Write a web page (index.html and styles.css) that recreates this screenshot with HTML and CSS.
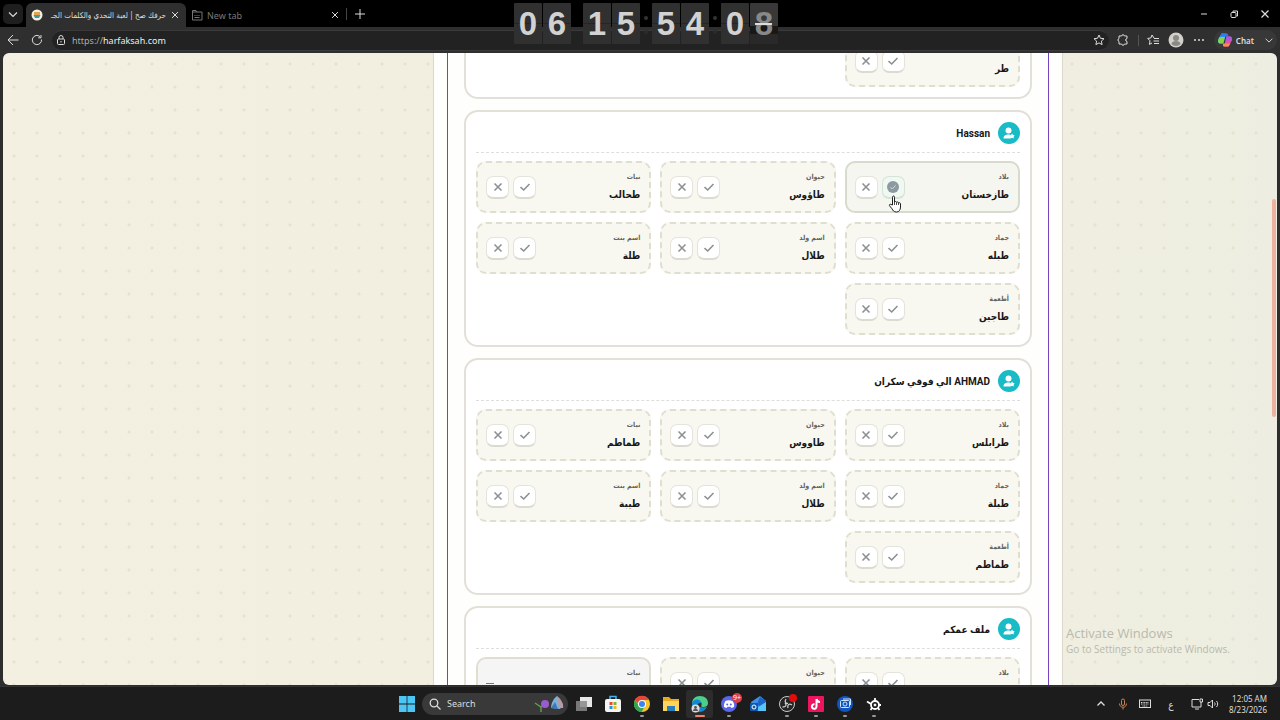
FILE: index.html
```
<!DOCTYPE html>
<html lang="ar">
<head>
<meta charset="utf-8">
<meta name="viewport" content="width=device-width, initial-scale=1">
<title>حرفك صح</title>
<link rel="stylesheet" href="styles.css">
</head>
<body>
<svg class="defs" aria-hidden="true">
  <symbol id="check" viewBox="0 0 12 12"><path d="M1.500 6.200 4.700 9 10.500 3" fill="none" stroke="currentColor" stroke-width="1.600"/></symbol>
  <symbol id="cross" viewBox="0 0 12 12"><path d="M2.500 2.500l7 7M9.500 2.500l-7 7" fill="none" stroke="currentColor" stroke-width="1.600"/></symbol>
  <symbol id="close" viewBox="0 0 12 12"><path d="M2.500 2.500l7 7M9.500 2.500l-7 7" fill="none" stroke="currentColor" stroke-width="1.200"/></symbol>
  <symbol id="chevron" viewBox="0 0 12 12"><path d="M2 4.500l4 4 4-4" fill="none" stroke="currentColor" stroke-width="1.100"/></symbol>
  <symbol id="person" viewBox="0 0 22 22"><circle cx="10.500" cy="8.500" r="3" fill="#fff"/><path d="M5.500 16.500c0-3 2-4 5-4 1.500 0 2 .3 2.500.8l-.5 3.200z" fill="#fff"/><path d="M14 11.500l1 1.600 1.700.3-1.100 1.300.2 1.700-1.800-.6-1.600.6.1-1.700-1.100-1.300 1.700-.3z" fill="#fff"/></symbol>
</svg>
<div class="desktop">
  <header class="tabs">
    <button class="tab-menu" aria-label="Tab actions"><svg class="i12"><use href="#chevron"/></svg></button>
    <div class="tab tab-active">
      <svg class="i12" viewBox="0 0 12 12"><circle cx="6" cy="6" r="5.500" fill="#f6f1df"/><path d="M3 3h6v3H3z" fill="#e5a34e"/><path d="M2.500 6h7L8 9H4z" fill="#3b9aa4"/></svg>
      <span class="tab-title" dir="rtl">حرفك صح | لعبة التحدي والكلمات الجـ</span>
      <button class="icon-btn" aria-label="Close tab"><svg class="i10"><use href="#close"/></svg></button>
    </div>
    <div class="tab">
      <svg class="i12 muted" viewBox="0 0 12 12" fill="none" stroke="currentColor"><path d="M1.500 3V1.500H5L6 3h5v8H1.500V3H6M3.500 6.500h1M5.500 6.500h1M7.500 6.500h1M3.500 8.500h5"/></svg>
      <span class="tab-title muted">New tab</span>
      <button class="icon-btn" aria-label="Close tab"><svg class="i10"><use href="#close"/></svg></button>
    </div>
    <button class="icon-btn new-tab" aria-label="New tab"><svg class="i12" viewBox="0 0 12 12" stroke="currentColor"><path d="M6 1v10M1 6h10"/></svg></button>
    <div class="window-btns">
      <button class="icon-btn" aria-label="Minimize"><svg class="i10" viewBox="0 0 10 10" stroke="currentColor"><path d="M2 5h6"/></svg></button>
      <button class="icon-btn" aria-label="Restore"><svg class="i10" viewBox="0 0 10 10" fill="none" stroke="currentColor"><rect x="2" y="3.500" width="5" height="5" rx="1"/><path d="M4 3V2h4.500v5H7.500"/></svg></button>
      <button class="icon-btn" aria-label="Close"><svg class="i12"><use href="#close"/></svg></button>
    </div>
  </header>

  <nav class="toolbar">
    <button class="icon-btn" aria-label="Back"><svg class="i12" viewBox="0 0 12 12" fill="none" stroke="currentColor"><path d="M11.500 6H1M6 1L1 6l5 5"/></svg></button>
    <button class="icon-btn" aria-label="Refresh"><svg class="i12" viewBox="0 0 12 12" fill="none" stroke="currentColor"><path d="M10.500 5.500A4.600 4.600 0 1 1 9 2.600M10 1v2.800H7.200"/></svg></button>
    <div class="address">
      <svg class="i10" viewBox="0 0 10 10" fill="none" stroke="currentColor"><rect x="1.500" y="4" width="7" height="5.500" rx="1"/><path d="M3 4V2.500a2 2 0 0 1 4 0V4M5 6v1.500"/></svg>
      <span class="url"><span class="scheme">https://</span>harfaksah.com</span>
      <button class="icon-btn" aria-label="Favorite"><svg class="i12" viewBox="0 0 12 12" fill="none" stroke="currentColor"><path d="M6 1l1.500 3.300 3.500.4-2.600 2.400.7 3.500L6 8.900l-3.100 1.700.7-3.500L1 4.700l3.500-.4z"/></svg></button>
    </div>
    <div class="tools">
      <button class="icon-btn" aria-label="Extensions"><svg class="i12" viewBox="0 0 12 12" fill="none" stroke="currentColor"><path d="M2 2h2.500c0-1.600 3-1.600 3 0H10v2.500c-1.800 0-1.800 3 0 3V10H7.500c0 1.600-3 1.600-3 0H2V7.500c-1.300 0-1.300-3 0-3z"/></svg></button>
      <i class="divider"></i>
      <button class="icon-btn" aria-label="Favorites"><svg class="i12" viewBox="0 0 12 12" fill="none" stroke="currentColor"><path d="M7 4L5 1 3.800 4 .7 4.400 3 6.800l-.6 3.600L5 9M7 4.500h5M6.500 7H12M7 9.500h5"/></svg></button>
      <button class="icon-btn" aria-label="Profile"><svg class="i16" viewBox="0 0 16 16"><circle cx="8" cy="8" r="7.500" fill="#d2d0ca"/><circle cx="8" cy="6" r="3" fill="#8a8985"/><path d="M3.500 12c0-4 9-4 9 0-2 2.500-7 2.500-9 0z" fill="#8a8985"/></svg></button>
      <button class="icon-btn" aria-label="More"><svg class="i12" viewBox="0 0 12 12" fill="currentColor"><circle cx="2" cy="6" r="1"/><circle cx="6" cy="6" r="1"/><circle cx="10" cy="6" r="1"/></svg></button>
      <button class="chat"><svg class="i16" viewBox="0 0 16 16"><path d="M4.500 1.500h4.500L6.500 11.500H3.500C1 11.500 .8 9.500 1.200 7.500z" fill="#28a9ea"/><path d="M2.500 5h5.500l-2 6.500H3.500C1 11.500 .8 9.500 1.200 8z" fill="#86d24d"/><path d="M4.500 1.500H10c1 0 1 1.500 1.500 3H3z" fill="#2e7df0"/><path d="M11.500 14.500H7l2.500-10h3c2.500 0 2.700 2 2.300 4z" fill="#e9509b"/><path d="M11.500 14.500H7c-1.500 0-1-1.500-1-3h7.500z" fill="#fa8a55"/><path d="M9.500 4.500h3c2.500 0 2.700 2 2.300 4H8.500z" fill="#a85be8"/></svg><span>Chat</span><svg class="i10"><use href="#chevron"/></svg></button>
    </div>
  </nav>

  <div class="clock" role="timer" aria-label="06:15:54:08">
    <div class="pair"><span>0</span><span>6</span></div>
    <div class="pair"><span>1</span><span>5</span></div>
    <div class="pair dots"><span>5</span><span>4</span></div>
    <div class="pair dots"><span>0</span><span class="flip">8</span></div>
  </div>

  <div class="viewport">
    <main class="column" dir="rtl">
      <div class="panel">
        <div class="list" id="list"></div>
      </div>
    </main>
    <div class="scroll-thumb"></div>
    <div class="watermark"><p class="wm-title">Activate Windows</p><p class="wm-text">Go to Settings to activate Windows.</p></div>
    <svg class="pointer" viewBox="0 0 14 18"><path d="M4.500 10V2.200c0-1.600 2-1.600 2 0V7c.4-.8 1.900-.7 2 .3.500-.7 1.900-.4 2 .6.600-.5 2-.2 2 1V12c0 3-1.500 5-4 5-2.800 0-3.500-1.500-4.500-3.200L1.500 10.700c-.6-1 .6-1.900 1.500-1.200z" fill="#fff" stroke="#222"/><path d="M6.500 7v3M8.500 7.500V10M10.500 8v2" stroke="#222" stroke-width=".8"/></svg>
  </div>

  <footer class="taskbar">
    <div class="apps">
      <button class="app" aria-label="Start"><svg class="i16" viewBox="0 0 16 16" fill="#4cc7f5"><path d="M0 0h7.600v7.600H0zM8.400 0H16v7.600H8.400zM0 8.400h7.600V16H0zM8.400 8.400H16V16H8.400z"/></svg></button>
      <button class="search"><svg class="i12" viewBox="0 0 12 12" fill="none" stroke="#ddd" stroke-width="1.300"><circle cx="5" cy="5" r="3.800"/><path d="M8 8l3.500 3.500"/></svg><span>Search</span><svg class="flowers" viewBox="0 0 30 18"><path d="M1 8l6 4 7-5M7 17v-6" fill="none" stroke="#5d9b50" stroke-width="1.500"/><circle cx="11" cy="9" r="4" fill="#9a5ccb"/><path d="M17 13c0-5 3-10 6-12l6 9-3 4z" fill="#7cb2d8"/><path d="M23 1l2 12h4c1-4-2-9-6-12z" fill="#b79aa8"/><path d="M17 13l4-6 3 7z" fill="#3e78b9"/></svg></button>
      <button class="app" aria-label="Task view"><svg class="i18" viewBox="0 0 18 18"><path d="M5 2h12v10H5z" fill="#e7e7e7"/><path d="M1 6h11v10H1z" fill="#888" opacity=".85"/></svg></button>
      <button class="app" aria-label="Store"><svg class="i18" viewBox="0 0 18 18"><path d="M6 5V1.500h6V5" fill="none" stroke="#48b4ec" stroke-width="1.500"/><rect x="1" y="4" width="16" height="13" rx="2" fill="#f4f4f4"/><path d="M5.500 7h3v3h-3z" fill="#ea4b2c"/><path d="M9.500 7h3v3h-3z" fill="#7cb928"/><path d="M5.500 11h3v3h-3z" fill="#2495e4"/><path d="M9.500 11h3v3h-3z" fill="#f5b620"/></svg></button>
      <button class="app running" aria-label="Chrome"><svg class="i18" viewBox="0 0 18 18"><circle cx="9" cy="9" r="8" fill="#f5c42c"/><path d="M2 5a8 8 0 0 1 14 0H9v8z" fill="#e5453a"/><path d="M2 5a8 8 0 0 0 6.500 12L12 11H6z" fill="#30a650"/><circle cx="9" cy="9" r="4" fill="#fff"/><circle cx="9" cy="9" r="3" fill="#3c83f1"/></svg></button>
      <button class="app" aria-label="Files"><svg class="i18" viewBox="0 0 18 18"><path d="M1 2h6l2 2h8v12H1z" fill="#e9a925"/><path d="M1 6h16v10H1z" fill="#ffd45a"/><path d="M5 11h8v5H5z" fill="#2680bd"/></svg></button>
      <button class="app running current" aria-label="Edge"><svg class="i18" viewBox="0 0 18 18"><path d="M1 9C1 4 4 1 9 1s8 3 8 7c0 3-2 4-5 4-2 0-2-1-1.500-2 .8-2-1-4-4-4S1 8 1 9z" fill="#4ccf88"/><path d="M1 9c0-4 8-7 9-1-5-1-5 6 6 4-2 4-5 5-8 5-4 0-7-4-7-8z" fill="#1487d4"/><circle cx="4.500" cy="13.500" r="4" fill="#dcdcdc"/><circle cx="4.500" cy="12.500" r="1.400" fill="#555"/><path d="M2 16c0-3 5-3 5 0z" fill="#555"/></svg></button>
      <button class="app running" aria-label="Discord"><svg class="i18" viewBox="0 0 18 18"><circle cx="9" cy="9" r="8" fill="#5966ea"/><path d="M5.500 6c2-1 5-1 7 0 1.500 2 2 4 1.500 6l-2.500 1-1-1.300h-3L6.500 13 4 12c-.3-2 .2-4 1.500-6z" fill="#fff"/><circle cx="7.200" cy="9.500" r="1" fill="#5966ea"/><circle cx="10.800" cy="9.500" r="1" fill="#5966ea"/></svg><span class="badge">9+</span></button>
      <button class="app" aria-label="Outlook"><svg class="i18" viewBox="0 0 18 18"><path d="M2 7l9-6 6 5v10H3z" fill="#3d8fe8"/><path d="M11 2l6 4v10L8 9z" fill="#1d62c7"/><path d="M3 16l14-9v9z" fill="#57c4fa"/><rect x="1" y="8" width="8" height="8" rx="1" fill="#0f59ad"/><circle cx="5" cy="12" r="2" fill="none" stroke="#fff"/></svg></button>
      <button class="app running" aria-label="OBS"><svg class="i18 spill" viewBox="0 0 18 18"><circle cx="9" cy="9" r="7.500" fill="#242424" stroke="#ccc"/><path d="M8 4c-2 3 0 4.500 2 4.500M14 10c-3-2-5 0-4 3M4.500 12c3.500 0 4.500-2 2.500-4" fill="none" stroke="#ccc" stroke-width="1.300"/><circle cx="15" cy="3" r="4" fill="#e40b0b"/></svg></button>
      <button class="app running" aria-label="TikTok"><svg class="i18" viewBox="0 0 18 18"><rect x="1" y="1" width="16" height="16" rx="1" fill="#ec1660"/><path d="M9.500 4v7.500a2.300 2.300 0 1 1-2-2.300M9.500 4c.3 2 1.500 3 3.500 3" fill="none" stroke="#fff" stroke-width="2"/></svg></button>
      <button class="app running" aria-label="Capture"><svg class="i18" viewBox="0 0 18 18"><circle cx="9" cy="9" r="8" fill="#1254bd"/><g fill="none" stroke="#cce5ff"><rect x="4.500" y="5.500" width="9" height="7" rx="1"/><circle cx="9" cy="9" r="2"/><path d="M7 4h7.500v6"/></g></svg></button>
      <button class="app running" aria-label="SteelSeries"><svg class="i18" viewBox="0 0 18 18" fill="none" stroke="#fff"><circle cx="10" cy="10" r="4" stroke-width="1.800"/><circle cx="10" cy="10" r="1" fill="#fff"/><path d="M10 6V3M14 10h2M13 13l1.500 2M7 13l-1.500 2M6 9L2 6.500" stroke-width="1.800"/></svg></button>
    </div>
    <div class="tray">
      <svg class="i12" viewBox="0 0 12 12" fill="none" stroke="currentColor" stroke-width="1.300"><path d="M2.500 7.500L6 4l3.500 3.500"/></svg>
      <svg class="i12 mic" viewBox="0 0 12 12" fill="none" stroke="currentColor"><rect x="4.500" y="1" width="3" height="6.500" rx="1.500"/><path d="M2.500 5.500c0 5 7 5 7 0M6 9.500v2"/></svg>
      <svg class="i12" viewBox="0 0 12 12" fill="none" stroke="currentColor"><rect x=".5" y="2" width="11" height="7.500"/><path d="M2 4.500h8M2 6h8M3.500 8h5" stroke-dasharray="1 .6"/></svg>
      <span class="lang">ع</span>
      <span class="net"><svg class="i12" viewBox="0 0 12 12" fill="none" stroke="currentColor"><path d="M8 1.500H1v7.500h9V6M4 11h4M9 1h2.500v3H9zM10 4v2"/></svg>
      <svg class="i12" viewBox="0 0 12 12" fill="none" stroke="currentColor"><path d="M1 4.500h2L5.500 2v8L3 7.500H1zM7.500 4.500c.8 1 .8 2 0 3M9.500 3c1.600 2 1.600 4 0 6"/></svg></span>
      <time class="time"><span>12:05 AM</span><span>8/23/2026</span></time>
    </div>
  </footer>
</div>
<script src="app.js"></script>
</body>
</html>
```
FILE: app.js
```
const labels = ["بلاد", "حيوان", "نبات", "جماد", "اسم ولد", "اسم بنت", "أطعمة"];
const players = [
  { name: "", first: 6, words: ["طر"] },
  { name: "Hassan", selected: 0, words: ["طازخستان", "طاؤوس", "طحالب", "طبله", "طلال", "طلة", "طاجين"] },
  { name: "AHMAD الي فوقي سكران", words: ["طرابلس", "طاووس", "طماطم", "طبلة", "طلال", "طيبة", "طماطم"] },
  { name: "ملف عمكم", words: [" ", " ", ""] }
];

const icon = (id) => `<svg class="i12"><use href="#${id}"/></svg>`;
const badgeCheck = '<svg class="i12" viewBox="0 0 12 12"><circle cx="6" cy="6" r="6" fill="#8d99a1"/><path d="M3.500 6.200l1.800 1.800 3.300-3.700" fill="none" stroke="#c9dcd6"/></svg>';

function cell(word, label, chosen) {
  if (!word) {
    return `<div class="cell cell-empty"><div class="answer"><span class="label">${label}</span></div><span class="dash"></span></div>`;
  }
  return `<div class="cell${chosen ? " cell-done" : ""}">
    <div class="answer"><span class="label">${label}</span><span class="word">${word}</span></div>
    <div class="votes">
      <button class="vote${chosen ? " vote-on" : ""}" aria-label="صح">${chosen ? badgeCheck : icon("check")}</button>
      <button class="vote" aria-label="خطأ">${icon("cross")}</button>
    </div>
  </div>`;
}

document.getElementById("list").innerHTML = players.map((p) => `
  <section class="card">
    <div class="card-head"><svg class="avatar"><use href="#person"/></svg><h2 class="name">${p.name}</h2></div>
    <div class="cells">${p.words.map((w, i) => cell(w, p.first ? "" : labels[i], p.selected === i)).join("")}</div>
  </section>`).join("");
```
FILE: styles.css
```
* { box-sizing: border-box; }
body { margin: 0; font-family: "Noto Sans", "DejaVu Sans Condensed", "DejaVu Sans", sans-serif; }
button { margin: 0; padding: 0; border: 0; background: none; color: inherit; font: inherit; }
svg { display: block; flex: none; }
.defs { position: absolute; width: 0; height: 0; }
.i10 { width: 10px; height: 10px; }
.i12 { width: 12px; height: 12px; }
.i16 { width: 16px; height: 16px; }
.i18 { width: 18px; height: 18px; }
.spill { overflow: visible; }
.desktop { position: relative; display: flex; flex-direction: column; height: 100vh; overflow: hidden; background: #2d2d2d; color: #ddd; }

.tabs { display: flex; align-items: center; height: 27px; flex: none; background: #000; font-size: 9px; }
.tab-menu { display: grid; place-items: center; width: 20px; height: 20px; margin: 0 3px; border-radius: 5px; background: #1e1e1e; }
.tab { display: flex; align-items: center; gap: 4px; width: 160px; height: 24px; margin-top: 3px; padding: 0 6px 0 5px; }
.tab-active { background: #2f2f2f; border-radius: 6px 6px 0 0; }
.tab-title { flex: 1; min-width: 0; overflow: hidden; white-space: nowrap; }
.tab-active .tab-title { font-family: "DejaVu Sans Condensed", "DejaVu Sans", sans-serif; font-size: 8px; }
.muted { color: #777; }
.icon-btn { display: grid; place-items: center; }
.new-tab { padding-left: 7px; border-left: 1px solid #444; }
.window-btns { display: flex; align-items: center; gap: 20px; margin-left: auto; padding-right: 9px; }

.toolbar { display: flex; align-items: center; gap: 12px; height: 26px; flex: none; padding: 0 3px 0 7px; background: #2f2f2f; }
.address { display: flex; flex: 1; align-items: center; gap: 6px; height: 21px; margin-left: -3px; padding: 0 4px; border-radius: 10px; background: #222; border-top: 1px solid #3a3a3a; border-bottom: 1px solid #3a3a3a; font-size: 9px; }
.url { flex: 1; color: #eee; }
.scheme { color: #aaa; }
.tools { display: flex; align-items: center; gap: 8px; margin-left: -4px; }
.tools .icon-btn { margin-right: 1px; }
.divider { width: 1px; height: 11px; background: #555; }
.chat { display: flex; align-items: center; gap: 3px; height: 20px; padding: 0 3px; border-radius: 10px; background: #383838; font-size: 8px; font-weight: 600; }
.chat .i10 { margin-left: 7px; }

.clock { position: absolute; z-index: 2; top: 3px; left: 514px; display: flex; gap: 12px; font: bold 33px/41px "Liberation Sans", sans-serif; color: #d2d2d2; }
.pair { position: relative; display: flex; gap: 1px; }
.pair span { width: 28px; height: 41px; text-align: center; border-radius: 1px; background: linear-gradient(#303030 0 49%, #252525 49% 51%, #303030 51%); }
.dots::before { content: ""; position: absolute; left: -8px; top: 13px; width: 4px; height: 4px; border-radius: 2px; background: #333; box-shadow: 0 14px #2b2b2b; }
.pair .flip { color: #888; background: linear-gradient(#383838 0 55%, #181818 55% 75%, #292929 75%); }
.flip::after { content: ""; position: absolute; left: 34px; top: 20px; width: 17px; height: 2px; background: #ddd; }

.viewport { position: relative; flex: 1; min-height: 0; display: flex; justify-content: center; margin: 0 3px 1px; overflow: hidden; border-radius: 6px; background: radial-gradient(circle at 11px 11px, #e8e1cf 1px, transparent 2px) 0 0 / 23px 23px, linear-gradient(90deg, #f3efe1, #f0eee0 80%, #edeee1); }
.column { display: flex; flex: none; width: min(630px, 100%); margin-left: 216px; padding: 0 13px; background: #fefefd; border: solid #dcd9cc; border-width: 0 1px; }
.panel { flex: 1; min-width: 0; padding: 0 16px; border: solid #7443c4; border-width: 0 1px; }
.list { display: grid; gap: 11px; margin-top: -69px; }
.card { padding: 10px; border: 2px solid #e2e0d8; border-radius: 14px; background: #fff; }
.card-head { display: flex; align-items: center; gap: 8px; padding-bottom: 8px; margin-bottom: 8px; border-bottom: 1px dashed #dedede; }
.avatar { width: 22px; height: 22px; border-radius: 11px; background: #19bbc7; }
.name { margin: 0; padding-top: 2px; font-family: Roboto, "DejaVu Sans Condensed", "DejaVu Sans", sans-serif; font-size: 10px; line-height: 16px; font-weight: 700; color: #171717; }
.cells { display: grid; grid-template-columns: repeat(3, 1fr); gap: 9px; }
.cell { display: flex; align-items: center; justify-content: space-between; height: 52px; padding: 0 9px 0 8px; border: 2px dashed #e0decf; border-radius: 10px; background: #f8f8f0; font-family: "DejaVu Sans Condensed", "DejaVu Sans", sans-serif; }
.cell-done { border-style: solid; border-color: #d8dacb; background: #f6f6f0; }
.cell-empty { border-style: solid; background: #f5f5f6; }
.answer { display: flex; flex-direction: column; height: 40px; }
.label { min-height: 20px; font-size: 7px; line-height: 20px; font-weight: 700; color: #66625d; }
.word { font-size: 10px; line-height: 16px; font-weight: 700; color: #181818; }
.dash { width: 8px; height: 1px; background: #777; }
.votes { display: flex; gap: 4px; }
.vote { display: grid; place-items: center; width: 23px; height: 23px; border: 1px solid #e4e3dc; border-bottom: 2px solid #dcdbd1; border-radius: 7px; background: #fff; color: #8d9092; }
.vote-on { background: #f1f8f1; border-color: #d3e3d7; }
.scroll-thumb { position: absolute; right: 1px; top: 146px; width: 4px; height: 218px; border-radius: 2px; background: #ebb2a0; }
.watermark { position: absolute; left: 1063px; bottom: 29px; color: #b9b9ad; font-family: "Open Sans", sans-serif; }
.watermark p { margin: 0; white-space: nowrap; }
.wm-title { font-size: 13px; line-height: 18px; }
.wm-text { font-size: 10px; line-height: 14px; }
.pointer { position: absolute; left: 885px; top: 142px; width: 14px; height: 18px; }

.taskbar { position: relative; display: flex; justify-content: center; height: 34px; flex: none; border-top: 1px solid #333; background: #1c1c1c; }
.apps { display: flex; align-items: center; gap: 2px; }
.app { position: relative; display: grid; place-items: center; width: 27px; height: 28px; border-radius: 3px; }
.current { background: #2c2c2c; }
.running::after { content: ""; position: absolute; left: 12px; bottom: 1px; width: 4px; height: 2px; border-radius: 1px; background: #999; }
.current::after { left: 9px; width: 10px; background: #f0836a; }
.badge { position: absolute; right: 0; top: 3px; width: 10px; height: 10px; border-radius: 5px; background: #dc3c46; color: #fff; font-size: 7px; line-height: 10px; text-align: center; }
.search { display: flex; align-items: center; gap: 6px; width: 146px; height: 22px; padding: 0 4px 0 7px; border-radius: 11px; background: #393939; font-size: 9px; }
.flowers { width: 30px; height: 18px; margin-left: auto; }
.tray { position: absolute; right: 13px; top: 0; height: 33px; display: flex; align-items: center; gap: 10px; font-size: 8px; }
.mic { color: #cb8057; }
.lang { width: 20px; text-align: center; font-size: 10px; }
.net { display: flex; gap: 4px; }
.time { display: flex; flex-direction: column; text-align: right; line-height: 11px; }
```
